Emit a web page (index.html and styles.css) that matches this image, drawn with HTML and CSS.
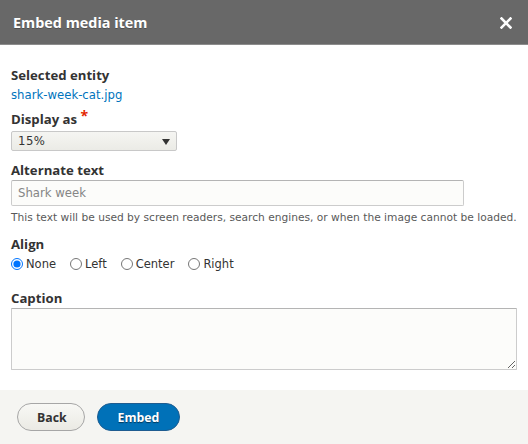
FILE: index.html
```html
<!DOCTYPE html>
<html lang="en">
<head>
<meta charset="utf-8">
<title>Embed media item</title>
<link rel="stylesheet" href="styles.css">
</head>
<body>
<div class="dialog">
  <div class="titlebar">
    <span class="title">Embed media item</span>
    <button class="close" aria-label="Close">
      <svg width="12" height="12" viewBox="0 0 12 12"><path d="M1.5 1.5 L10.5 10.5 M10.5 1.5 L1.5 10.5" stroke="#fff" stroke-width="2.6" stroke-linecap="square"/></svg>
    </button>
  </div>
  <div class="content">
    <div class="label first">Selected entity</div>
    <a class="link" href="#">shark-week-cat.jpg</a>

    <div class="label gap6">Display as <span class="req">*</span></div>
    <div class="select"><span>15%</span><span class="arrow"></span></div>

    <div class="label gap10">Alternate text</div>
    <input class="text" type="text" placeholder="Shark week">
    <div class="desc">This text will be used by screen readers, search engines, or when the image cannot be loaded.</div>

    <div class="label gap10">Align</div>
    <div class="radios">
      <label class="radio"><input type="radio" name="align" checked><span>None</span></label>
      <label class="radio"><input type="radio" name="align"><span>Left</span></label>
      <label class="radio"><input type="radio" name="align"><span>Center</span></label>
      <label class="radio"><input type="radio" name="align"><span>Right</span></label>
    </div>

    <div class="label gap16">Caption</div>
    <textarea class="caption"></textarea>
  </div>
  <div class="footer">
    <button class="btn">Back</button>
    <button class="btn primary">Embed</button>
  </div>
</div>
</body>
</html>
```

FILE: styles.css
```css
html, body {
  margin: 0;
  padding: 0;
  background: #fff;
}
body {
  font-family: "DejaVu Sans", sans-serif;
  font-size: 11.7px;
  color: #333;
  width: 528px;
  height: 444px;
  overflow: hidden;
}
.dialog {
  display: flex;
  flex-direction: column;
  height: 444px;
}
.titlebar {
  height: 45px;
  box-sizing: border-box;
  background: #686868;
  border-bottom: 1px solid #8c8c8c;
  display: flex;
  align-items: center;
  justify-content: space-between;
  padding: 0 16px 0 13px;
}
.title {
  font-family: "Open Sans", sans-serif;
  font-weight: 700;
  font-size: 14.4px;
  color: #fff;
  text-shadow: 0 1px 0 rgba(0,0,0,0.25);
  padding-top: 1px;
}
.close {
  border: 0;
  background: none;
  padding: 0;
  width: 12px;
  height: 12px;
  display: flex;
  margin-top: 1px;
}
.content {
  padding: 21px 11px 0 11px;
  display: flex;
  flex-direction: column;
  align-items: flex-start;
  flex: 1;
}
.label {
  font-family: "Open Sans", sans-serif;
  font-weight: 700;
  font-size: 13.2px;
  line-height: 18px;
  color: #333;
}
.gap6 { margin-top: 6px; }
.gap10 { margin-top: 10px; }
.gap16 { margin-top: 16px; }
.req {
  color: #e32700;
  font-size: 14px;
  position: relative;
  top: -3px;
}
.link {
  margin-top: 2px;
  line-height: 18px;
  color: #0074bd;
  text-decoration: none;
}
.select {
  margin-top: 3px;
  width: 166px;
  height: 20px;
  box-sizing: border-box;
  border: 1px solid #c8c8c8;
  border-radius: 2px;
  background: linear-gradient(#f5f5f2, #ebebe6);
  display: flex;
  align-items: center;
  justify-content: space-between;
  padding: 0 6px 0 6px;
  line-height: 18px;
  letter-spacing: 0.5px;
}
.arrow {
  width: 0;
  height: 0;
  border-left: 4px solid transparent;
  border-right: 4px solid transparent;
  border-top: 6px solid #333;
  margin-top: 1px;
}
.text {
  margin: 1px 0 0 0;
  width: 453px;
  height: 26px;
  box-sizing: border-box;
  border: 1px solid #ccc;
  border-top-color: #b4b4b4;
  border-radius: 2px;
  background: #fcfcfa;
  padding: 0 6px;
  font-family: "DejaVu Sans", sans-serif;
  font-size: 11.7px;
  color: #333;
}
.text::placeholder {
  color: #858585;
}
.desc {
  margin-top: 5px;
  font-size: 10.65px;
  line-height: 14px;
  color: #595959;
  white-space: nowrap;
}
.radios {
  margin-top: 2px;
  display: flex;
  gap: 14px;
  line-height: 18px;
  font-size: 11.5px;
}
.radio {
  display: flex;
  align-items: center;
  gap: 3px;
}
.radio input {
  margin: 0;
  width: 12px;
  height: 12px;
  accent-color: #0075ff;
}
.caption {
  margin: 1px 0 0 0;
  width: 506px;
  height: 62px;
  box-sizing: border-box;
  border: 1px solid #ccc;
  border-top-color: #b4b4b4;
  border-radius: 1px;
  background: #fcfcfa;
  resize: vertical;
  font-family: "DejaVu Sans", sans-serif;
}
.footer {
  height: 54px;
  box-sizing: border-box;
  background: #f5f5f2;
  padding: 13px 17px 0 17px;
  display: flex;
  gap: 12px;
  align-items: flex-start;
}
.btn {
  height: 28px;
  box-sizing: border-box;
  border-radius: 20px;
  border: 1px solid #a6a6a6;
  background: linear-gradient(#f8f8f5, #ebeae4);
  color: #333;
  font-family: "Open Sans", sans-serif;
  font-weight: 700;
  font-size: 12.3px;
  padding: 0 19px;
  width: 68px;
}
.btn.primary {
  width: 83px;
  background: #0071b8;
  border-color: #1e5c90;
  color: #fff;
  text-shadow: 0 1px 1px rgba(0,0,0,0.5);
}
```
